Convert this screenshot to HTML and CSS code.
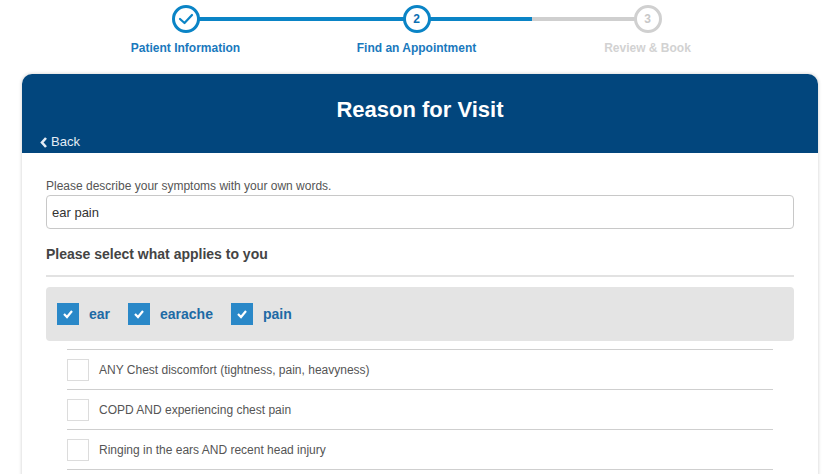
FILE: index.html
```html
<!DOCTYPE html>
<html>
<head>
<meta charset="utf-8">
<link rel="stylesheet" href="styles.css">
</head>
<body>
<div class="stepper">
  <div class="step done first">
    <div class="circle"><svg width="16" height="12" viewBox="0 0 16 12"><path d="M2 6 L6.5 10 L14 2" fill="none" stroke="#0a84c6" stroke-width="2.2" stroke-linecap="round" stroke-linejoin="round"/></svg></div>
    <div class="label">Patient Information</div>
  </div>
  <div class="step active">
    <div class="circle">2</div>
    <div class="label">Find an Appointment</div>
  </div>
  <div class="step todo last">
    <div class="circle">3</div>
    <div class="label">Review &amp; Book</div>
  </div>
</div>

<div class="card">
  <div class="card-head">
    <h1 class="title">Reason for Visit</h1>
    <a class="back"><svg width="8" height="11" viewBox="0 0 8 11"><path d="M6 1 L2 5.5 L6 10" fill="none" stroke="#e4ecf5" stroke-width="2.6"/></svg>Back</a>
  </div>
  <div class="card-body">
    <div class="field-label">Please describe your symptoms with your own words.</div>
    <div class="input">ear pain</div>
    <h2 class="section">Please select what applies to you</h2>
    <div class="rule"></div>
    <div class="tags">
      <div class="tag"><span class="cb on"><svg width="12" height="10" viewBox="0 0 12 10"><path d="M2 5 L5 8 L10 2" fill="none" stroke="#fff" stroke-width="2.2"/></svg></span><span class="tag-text">ear</span></div>
      <div class="tag"><span class="cb on"><svg width="12" height="10" viewBox="0 0 12 10"><path d="M2 5 L5 8 L10 2" fill="none" stroke="#fff" stroke-width="2.2"/></svg></span><span class="tag-text">earache</span></div>
      <div class="tag"><span class="cb on"><svg width="12" height="10" viewBox="0 0 12 10"><path d="M2 5 L5 8 L10 2" fill="none" stroke="#fff" stroke-width="2.2"/></svg></span><span class="tag-text">pain</span></div>
    </div>
    <ul class="list">
      <li class="row"><span class="cb off"></span><span>ANY Chest discomfort (tightness, pain, heavyness)</span></li>
      <li class="row"><span class="cb off"></span><span>COPD AND experiencing chest pain</span></li>
      <li class="row"><span class="cb off"></span><span>Ringing in the ears AND recent head injury</span></li>
      <li class="row end"></li>
    </ul>
  </div>
</div>
</body>
</html>
```

FILE: styles.css
```css
html, body {
  margin: 0;
  padding: 0;
  background: #fff;
  font-family: "Liberation Sans", Arial, sans-serif;
  overflow: hidden;
}

.stepper {
  display: flex;
  width: 693px;
  margin-left: 70px;
  padding-top: 5px;
  height: 54px;
  margin-bottom: 15px;
}
.step {
  position: relative;
  width: 231px;
  display: flex;
  flex-direction: column;
  align-items: center;
}
.step::before, .step::after {
  content: "";
  position: absolute;
  top: 12px;
  height: 4px;
  width: 50%;
  background: #0a84c6;
}
.step::before { left: 0; }
.step::after { right: 0; }
.step.first::before, .step.last::after { display: none; }
.step.todo::before { background: #cfcfcf; }

.circle {
  position: relative;
  z-index: 1;
  box-sizing: border-box;
  width: 28px;
  height: 28px;
  border-radius: 50%;
  border: 3px solid #0a84c6;
  background: #fff;
  display: flex;
  align-items: center;
  justify-content: center;
  font-size: 12px;
  font-weight: bold;
  color: #0a6fb3;
}
.step.todo .circle {
  border-color: #d0d0d0;
  color: #c8c8c8;
}
.label {
  margin-top: 8px;
  font-size: 12px;
  line-height: 14px;
  font-weight: bold;
  color: #1a79bd;
  white-space: nowrap;
}
.step.todo .label { color: #d2d2d2; }

.card {
  margin-left: 22px;
  width: 796px;
  border-radius: 10px 10px 0 0;
  box-shadow: 0 0 3px 1px rgba(0,0,0,0.12);
  background: #fff;
  height: 420px;
}
.card-head {
  background: #02467d;
  border-radius: 10px 10px 0 0;
  padding: 23px 18px 4px;
  height: 52px;
}
.title {
  margin: 0;
  text-align: center;
  font-size: 22px;
  line-height: 26px;
  font-weight: bold;
  color: #fff;
}
.back {
  display: flex;
  align-items: center;
  gap: 3px;
  margin-top: 11px;
  font-size: 13px;
  line-height: 16px;
  color: #e4ecf5;
}

.card-body {
  padding: 26px 24px 0;
}
.field-label {
  font-size: 12px;
  line-height: 14px;
  color: #555;
}
.input {
  margin-top: 2px;
  box-sizing: border-box;
  height: 34px;
  border: 1px solid #c8c8c8;
  border-radius: 4px;
  padding: 0 5px;
  display: flex;
  align-items: center;
  font-size: 13px;
  color: #333;
}
.section {
  margin: 17px 0 0;
  font-size: 14px;
  line-height: 17px;
  font-weight: bold;
  color: #444;
}
.rule {
  margin-top: 12px;
  height: 2px;
  background: #e2e2e2;
}
.tags {
  margin-top: 10px;
  height: 54px;
  box-sizing: border-box;
  background: #e4e4e4;
  border-radius: 4px;
  display: flex;
  align-items: center;
  padding-left: 11px;
  padding-bottom: 1px;
}
.tag {
  display: flex;
  align-items: center;
  margin-right: 18px;
}
.cb {
  box-sizing: border-box;
  width: 22px;
  height: 22px;
  display: flex;
  align-items: center;
  justify-content: center;
  flex-shrink: 0;
}
.cb.on { background: #2a88c8; }
.cb.off { border: 1px solid #dcdcdc; background: #fff; }
.tag-text {
  margin-left: 10px;
  font-size: 14px;
  font-weight: bold;
  color: #1d6aa5;
}
.list {
  list-style: none;
  margin: 8px 21px 0;
  padding: 0;
}
.row {
  border-top: 1px solid #cfcfcf;
  height: 39px;
  display: flex;
  align-items: center;
  font-size: 12px;
  color: #555;
}
.row .cb { margin-right: 10px; }
```
